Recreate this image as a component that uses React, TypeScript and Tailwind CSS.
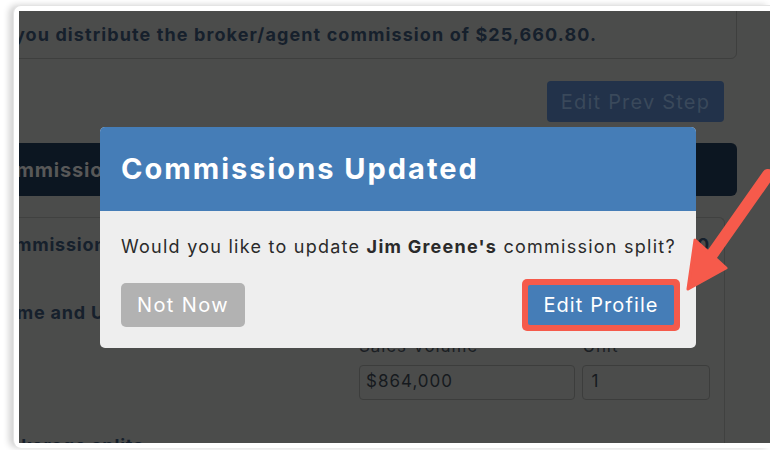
import React from 'react';

const font = { fontFamily: 'Inter, "Noto Sans", sans-serif' };

// Dimmed commission page sitting behind the modal
const CommissionPage: React.FC = () => (
  <div className="-ml-[20px] flex w-[738px] flex-col">
    {/* intro question */}
    <div className="-mt-[10px] flex h-[58px] items-end overflow-hidden rounded-md border border-[#3e3f3e] pb-[10px]">
      <p className="ml-[14px] whitespace-nowrap text-[18px] font-bold tracking-[1.1px] text-[#16202c]">
        you distribute the broker/agent commission of $25,660.80.
      </p>
    </div>

    <div className="mt-[22px] flex justify-end pr-[13px]">
      <button className="h-[41px] w-[177px] rounded-[4px] bg-[#22324a] text-[20px] tracking-[1.2px] text-[#3a495b]">
        Edit Prev Step
      </button>
    </div>

    <div className="mt-[21px] flex h-[53px] items-center overflow-hidden rounded-md bg-[#0c1621]">
      <span className="-ml-[12px] whitespace-nowrap text-[20px] font-bold tracking-[0.8px] text-[#585858]">
        Commissions
      </span>
    </div>

    <div className="mt-[21px] mr-[12px] overflow-hidden rounded-t-md border border-b-0 border-[#404140] pr-[14px]">
      <div className="mt-[13px] flex items-center justify-between">
        <span className="-ml-[11px] text-[18px] font-bold tracking-[0.8px] text-[#16202c]">Commission</span>
        <span className="text-[18px] font-bold tracking-[0.8px] text-[#16202c]">$25,660.80</span>
      </div>
      <div className="-ml-[26px] mt-[41px] whitespace-nowrap text-[18px] font-bold tracking-[0.8px] text-[#16202c]">
        Volume and Units
      </div>
      <div className="mt-[8px] flex gap-[7px] pl-[359px]">
        <label className="flex w-[217px] flex-col gap-[5px]">
          <span className="text-[17px] tracking-[0.9px] text-[#1b1f24]">Sales Volume</span>
          <div className="flex h-[35px] items-center rounded-[4px] border border-[#3c3d3c] px-[6px] text-[17px] tracking-[1px] text-[#161a1e]">
            $864,000
          </div>
        </label>
        <label className="flex w-[128px] flex-col gap-[5px]">
          <span className="text-[17px] tracking-[0.9px] text-[#1b1f24]">Unit</span>
          <div className="flex h-[35px] items-center rounded-[4px] border border-[#3c3d3c] px-[8px] text-[17px] text-[#161a1e]">
            1
          </div>
        </label>
      </div>
      <div className="-ml-[11px] mt-[32px] whitespace-nowrap text-[18px] font-bold tracking-[0.8px] text-[#16202c]">
        Brokerage splits
      </div>
    </div>
  </div>
);

const UpdateModal: React.FC = () => (
  <div className="absolute left-[81px] top-[116px] w-[596px] overflow-hidden rounded-[5px] bg-[#eeeeee]">
    <div className="flex h-[84px] items-center bg-[#457db7] px-[21px]">
      <h2 className="text-[29px] font-bold tracking-[2px] text-white">Commissions Updated</h2>
    </div>
    <div className="pb-[17px] pl-[21px] pr-[16px] pt-[22px]">
      <p className="whitespace-nowrap text-[18px] tracking-[1.25px] text-[#2a2a2a]">
        Would you like to update <span className="font-bold">Jim Greene's</span> commission split?
      </p>
      <div className="mt-[19px] flex items-center justify-between">
        <button className="h-[44px] w-[124px] rounded-[5px] bg-[#b2b2b2] text-[20px] tracking-[1.4px] text-white">
          Not Now
        </button>
        <div className="rounded-[5px] bg-[#f55a4b] p-[6px]">
          <button className="block h-[40px] w-[146px] rounded-[2px] bg-[#457db7] text-[20px] tracking-[1.1px] text-white">
            Edit Profile
          </button>
        </div>
      </div>
    </div>
  </div>
);

const Arrow: React.FC = () => (
  <svg className="absolute left-0 top-0" width="770" height="450" viewBox="0 0 770 450">
    <line x1="768" y1="175" x2="711" y2="256" stroke="#f65a4b" strokeWidth="12" strokeLinecap="round" />
    <polygon points="688,289 726,268 695,240" fill="#f65a4b" stroke="#f65a4b" strokeWidth="3" strokeLinejoin="round" />
  </svg>
);

export default function App() {
  return (
    <div className="relative h-[450px] w-[770px] overflow-hidden bg-white pl-[13px] pt-[5px]" style={font}>
      <div className="h-[443px] rounded-l-[8px] border-l border-t border-[#e4e4e4] bg-white pl-[5px] pt-[5px] shadow-[-4px_0_6px_rgba(0,0,0,0.18)]">
        <div className="relative h-[432px] overflow-hidden bg-[#4b4c4b]">
          <CommissionPage />
          <UpdateModal />
        </div>
      </div>
      <Arrow />
    </div>
  );
}
